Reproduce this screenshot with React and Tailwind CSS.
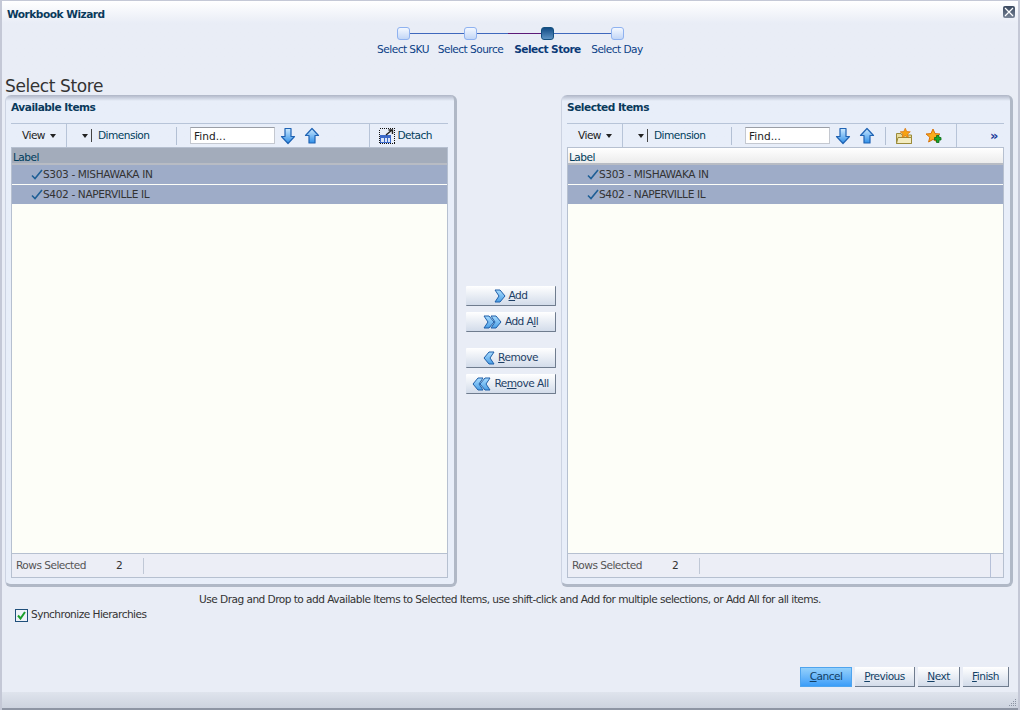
const rows = ['S303 - MISHAWAKA IN', 'S402 - NAPERVILLE IL']

function Grad({ id, from, to }) {
  return (
    <linearGradient id={id} x1="0" y1="0" x2="0" y2="1">
      <stop offset="0" stopColor={from} />
      <stop offset="1" stopColor={to} />
    </linearGradient>
  )
}

function ArrowIcon({ up }) {
  return (
    <svg width="16" height="18" viewBox="0 0 16 18" className="shrink-0">
      <defs><Grad id={up ? 'au' : 'ad'} from="#cdeaff" to="#2f8fe8" /></defs>
      <path
        d={up ? 'M8 1.5 L14.5 8.5 H11 V16 H5 V8.5 H1.5 Z' : 'M5 1.5 H11 V9.5 H14.5 L8 16.5 L1.5 9.5 H5 Z'}
        fill={`url(#${up ? 'au' : 'ad'})`}
        stroke="#1f63b4"
        strokeWidth="1.2"
        strokeLinejoin="round"
      />
    </svg>
  )
}

function Chevrons({ count = 1, left }) {
  const w = count === 1 ? 12 : 19
  return (
    <svg width={w} height="14" viewBox={`0 0 ${w} 14`} className={left ? 'shrink-0 -scale-x-100' : 'shrink-0'}>
      <defs><Grad id="chev" from="#a9dcff" to="#4b9fe6" /></defs>
      <path d="M1 1 H6 L11 7 L6 13 H1 L5 7 Z" fill="url(#chev)" stroke="#1f5fa8" strokeLinejoin="round" />
      {count > 1 && <path d="M8 1 H13 L18 7 L13 13 H8 L12 7 Z" fill="url(#chev)" stroke="#1f5fa8" strokeLinejoin="round" />}
    </svg>
  )
}

function Check() {
  return (
    <svg width="12" height="11" viewBox="0 0 12 11" className="shrink-0">
      <path d="M1 6.5 L4 9.5 L11 1" fill="none" stroke="#1f5f96" strokeWidth="1.6" />
    </svg>
  )
}

function Caret() {
  return <span className="inline-block w-0 h-0 border-x-[3.5px] border-x-transparent border-t-[4px] border-t-[#222]" />
}

function DetachIcon() {
  return (
    <svg width="16" height="16" viewBox="0 0 16 16" className="shrink-0">
      <rect x="0.5" y="0.5" width="15" height="15" fill="none" stroke="#111" strokeDasharray="1 1" shapeRendering="crispEdges" />
      <rect x="1.5" y="7.5" width="10" height="7" fill="#dbe6fa" stroke="#3b69c9" shapeRendering="crispEdges" />
      <rect x="1.5" y="7.5" width="10" height="2" fill="#3b69c9" shapeRendering="crispEdges" />
      <path d="M5 10 V14 M8 10 V14" stroke="#3b69c9" shapeRendering="crispEdges" />
      <path d="M7 7 L13 2 M9.5 2 H13.5 V6" fill="none" stroke="#222" strokeWidth="1.4" />
    </svg>
  )
}

const STAR = 'M8 1 L10 5.6 L15 6 L11.2 9.2 L12.4 14 L8 11.4 L3.6 14 L4.8 9.2 L1 6 L6 5.6 Z'

function FolderStarIcon() {
  return (
    <svg width="16" height="16" viewBox="0 0 16 16" className="shrink-0">
      <path d="M0.5 5.5 H5 L6 7 H15.5 V15.5 H0.5 Z" fill="#e8dc9c" stroke="#9a8a3a" />
      <path d="M0.5 15.5 L2 9.5 H15.5 V15.5 Z" fill="#f3ecc0" stroke="#9a8a3a" />
      <g transform="translate(3.5 -0.5) scale(0.72)">
        <path d={STAR} fill="#f7a312" stroke="#d9720a" />
      </g>
    </svg>
  )
}

function StarPlusIcon() {
  return (
    <svg width="17" height="16" viewBox="0 0 17 16" className="shrink-0">
      <path d={STAR} fill="#f9ac1c" stroke="#d9720a" />
      <path d="M9.5 9.5 H11.5 V7.5 H14 V9.5 H16 V12 H14 V14.5 H11.5 V12 H9.5 Z" fill="#18a82a" stroke="#0b6a18" strokeWidth="0.8" />
    </svg>
  )
}

function Underlined({ text, at }) {
  return (
    <span>
      {text.slice(0, at)}
      <span className="underline">{text[at]}</span>
      {text.slice(at + 1)}
    </span>
  )
}

function Step({ label, current, purple, first, last, width }) {
  return (
    <div className="flex flex-col items-center" style={{ width }}>
      <div className="flex items-center w-full h-[13px]">
        <div className={`flex-1 h-px ${first ? '' : purple ? 'bg-[#5c1a78]' : 'bg-[#3f68bd]'}`} />
        <div className={`w-[13px] h-[13px] rounded-[3px] border ${current ? 'border-[#14507f] bg-gradient-to-b from-[#0f4c84] to-[#5d93c4]' : 'border-[#8fb2f0] bg-gradient-to-b from-[#f4f8ff] to-[#c2d6f6]'}`} />
        <div className={`flex-1 h-px ${last ? '' : 'bg-[#3f68bd]'}`} />
      </div>
      <div className={`mt-[3px] leading-[13px] whitespace-nowrap text-[#0b3f86] ${current ? 'font-bold text-[#0c3a78]' : ''}`}>{label}</div>
    </div>
  )
}

function Divider() {
  return <div className="w-px h-[18px] bg-[#b3c0d4]" />
}

function Panel({ title, active, extra, dimWidth }) {
  return (
    <div className="w-[452px] h-[492px] flex flex-col rounded-md border-l border-[#ccd3e2] border-r-[3px] border-r-[#b0b8c6] border-b-[3px] border-b-[#b0b8c6] bg-gradient-to-b from-[#aeb5c6] via-[#e8eef9] via-[6px] to-[#e8eef9] pl-[5px] pr-[6px] pb-[6px]">
      <div className="h-[28px] pt-[5px] font-bold text-[#0a3a5c] leading-[14px] tracking-[-0.5px]">{title}</div>
      <div className="flex items-center h-[24px] border-t border-[#b7c4d8] text-[#003d5b]">
        <div className="w-[56px] h-full flex items-center gap-[5px] pl-[11px] pt-px border-r border-[#b7c4d8] text-[#222]">
          View <Caret />
        </div>
        <div className="flex items-center pl-[15px]" style={{ width: dimWidth }}>
          <Caret />
          <div className="w-px h-[13px] bg-[#444] ml-[3px] mr-[6px]" />
          <span className="flex-1 pt-px">Dimension</span>
          <Divider />
        </div>
        <input
          readOnly
          value="Find..."
          className="ml-[13px] w-[85px] h-[17px] bg-white border border-[#c4c8d0] border-t-[#9a9ea6] px-[3px] text-[#222] tracking-normal outline-none"
        />
        <div className="ml-[5px]"><ArrowIcon /></div>
        <div className="ml-[8px]"><ArrowIcon up /></div>
        {extra}
      </div>
      <div className="flex-1 flex flex-col border border-[#b6c0d0] bg-[#fdfef8]">
        <div className={`h-[17px] pl-px leading-[18px] border-b-2 border-[#b8bcc4] text-[#003d5b] ${active ? 'bg-[#a3acbb]' : 'bg-gradient-to-b from-white to-[#ececec]'}`}>Label</div>
        {rows.map(r => (
          <div key={r} className="h-[19px] flex items-center pl-[19px] mb-px bg-[#9eacc8] text-[#333] tracking-[-0.38px]">
            <Check /><span className="pt-px">{r}</span>
          </div>
        ))}
        <div className="flex-1" />
        <div className="h-[24px] flex items-center border-t border-[#b6c0d0] bg-[#eceef6] text-[#555] pl-[4px]">
          <span className="w-[100px]">Rows Selected</span>
          <span className="w-[27px] text-[#333]">2</span>
          <div className="w-px h-[16px] bg-[#c0c8d6]" />
          {!active && <div className="ml-auto w-px h-full bg-[#b6c0d8] mr-[12px]" />}
        </div>
      </div>
    </div>
  )
}

function ShuttleButton({ children, className = '' }) {
  return (
    <button className={`w-[90px] h-[20px] flex items-center justify-center gap-[3px] rounded-[1px] border-r border-b border-[#6f7c8e] bg-gradient-to-b from-white to-[#d3dcea] text-[#1d3f66] ${className}`}>
      {children}
    </button>
  )
}

function FooterButton({ children, width, primary }) {
  return (
    <button
      className={`h-[20px] flex items-center justify-center text-[#123f66] ${primary ? 'bg-gradient-to-b from-[#93d0fb] to-[#3a9df8] border border-[#4ea4ee]' : 'border-r border-b border-[#6f7c8e] bg-gradient-to-b from-white to-[#d3dcea]'}`}
      style={{ width }}
    >
      {children}
    </button>
  )
}

export default function App() {
  return (
    <div className="relative w-[1020px] h-[710px] flex flex-col overflow-hidden border-t border-l-2 border-r-2 border-[#c4c8d6] bg-[#e9edf6] font-['DejaVu_Sans',sans-serif] text-[10.6px] tracking-[-0.54px]">
      {/* title + train */}
      <div className="h-[77px] bg-gradient-to-b from-white to-[#e9edf6] to-[22px] relative">
        <div className="pl-[5px] pt-[6px] h-[26px] leading-[15px] font-bold text-[#0a3a5c] tracking-[-0.5px]">Workbook Wizard</div>
        <button className="absolute top-[5px] right-[3px] w-[12px] h-[12px] rounded-[2px] bg-gradient-to-b from-[#39485e] to-[#7a8698] flex items-center justify-center">
          <svg width="10" height="10" viewBox="0 0 10 10"><path d="M1 1 L9 9 M9 1 L1 9" stroke="#fff" strokeWidth="1.2" /></svg>
        </button>
        <div className="flex justify-center">
          <Step label="Select SKU" first width={60} />
          <Step label="Select Source" width={75} />
          <Step label="Select Store" current purple width={79} />
          <Step label="Select Day" last width={60} />
        </div>
      </div>

      <h1 className="h-[17px] pl-[3px] text-[17px] leading-[17px] font-normal text-[#333] tracking-[-0.4px]">Select Store</h1>

      <div className="flex items-center pl-[3px]">
        <Panel
          title="Available Items"
          active
          dimWidth={110}
          extra={
            <div className="ml-auto flex items-center h-full border-l border-[#b7c4d8] pl-[9px] pr-[16px] gap-[2px] text-[#003d5b]">
              <DetachIcon /> <span className="pt-px">Detach</span>
            </div>
          }
        />
        <div className="w-[104px] flex flex-col items-start pl-[9px] pb-[2px]">
          <ShuttleButton className="mb-[6px]"><Chevrons /> <Underlined text="Add" at={0} /></ShuttleButton>
          <ShuttleButton className="mb-[16px]"><Chevrons count={2} /> <Underlined text="Add All" at={5} /></ShuttleButton>
          <ShuttleButton className="mb-[6px]"><Chevrons left /> <Underlined text="Remove" at={0} /></ShuttleButton>
          <ShuttleButton><Chevrons count={2} left /> <Underlined text="Remove All" at={2} /></ShuttleButton>
        </div>
        <Panel
          title="Selected Items"
          dimWidth={109}
          extra={
            <div className="flex items-center h-full ml-[10px]">
              <Divider />
              <div className="ml-[10px]"><FolderStarIcon /></div>
              <div className="ml-[13px]"><StarPlusIcon /></div>
              <div className="ml-[14px] w-px h-full bg-[#b7c4d8]" />
              <span className="ml-[33px] text-[#1a3a9a] text-[13px] leading-none font-bold">»</span>
            </div>
          }
        />
      </div>

      <div className="mt-[5px] text-center text-[#333] leading-[14px]">
        Use Drag and Drop to add Available Items to Selected Items, use shift-click and Add for multiple selections, or Add All for all items.
      </div>

      <label className="mt-[2px] ml-[13px] flex items-center gap-[3px] text-[#333] h-[14px]">
        <span className="w-[13px] h-[13px] border border-[#1f4f7a] bg-[#eef2f8] flex items-center justify-center">
          <svg width="9" height="9" viewBox="0 0 9 9"><path d="M1 4.5 L3.5 7.5 L8 1" fill="none" stroke="#1aa02a" strokeWidth="2" /></svg>
        </span>
        Synchronize Hierarchies
      </label>

      <div className="flex-1" />

      <div className="flex justify-end gap-[3px] pr-[9px] mb-[5px]">
        <FooterButton primary width={52}><Underlined text="Cancel" at={0} /></FooterButton>
        <FooterButton width={60}><Underlined text="Previous" at={0} /></FooterButton>
        <FooterButton width={42}><Underlined text="Next" at={0} /></FooterButton>
        <FooterButton width={46}><Underlined text="Finish" at={0} /></FooterButton>
      </div>

      <div className="relative h-[18px] bg-gradient-to-b from-[#dfe4ed] to-[#cdd3df] border-b-2 border-[#8e95a4]">
        <svg width="10" height="10" viewBox="0 0 10 10" className="absolute right-[1px] bottom-0">
          <path d="M8 1h1v1H8zM6 3h1v1H6zM8 3h1v1H8zM4 5h1v1H4zM6 5h1v1H6zM8 5h1v1H8zM2 7h1v1H2zM4 7h1v1H4zM6 7h1v1H6zM8 7h1v1H8z" fill="#8a92a2" />
        </svg>
      </div>
    </div>
  )
}
